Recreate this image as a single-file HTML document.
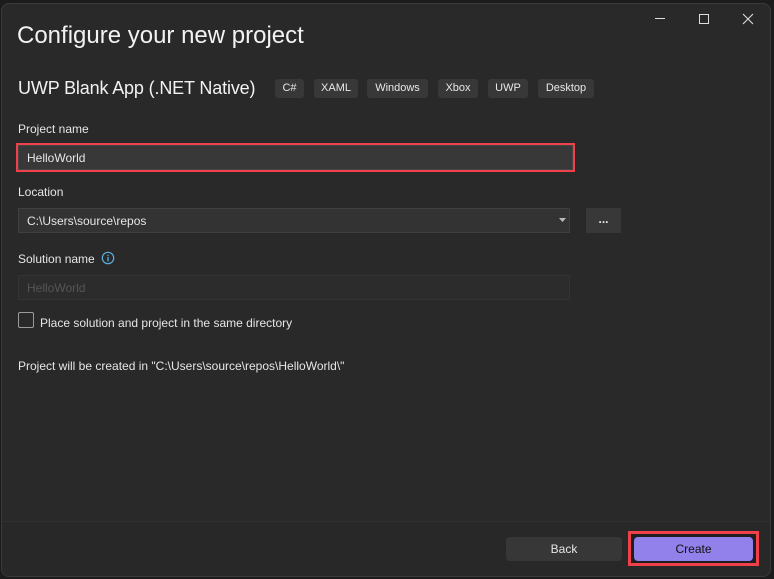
<!DOCTYPE html>
<html><head><meta charset="utf-8"><style>
*{margin:0;padding:0;box-sizing:border-box}
body{width:774px;height:579px;background:#1c1c1c;position:relative;overflow:hidden;font-family:"Liberation Sans",sans-serif;color:#e6e6e6}
.win{position:absolute;left:1px;top:3px;width:770px;height:574px;background:#292929;border:1px solid #3a3a3a;border-radius:8px;overflow:hidden}
.a{position:absolute}
.t{font-size:12px;white-space:nowrap}
.tag{position:absolute;top:79px;height:19px;background:#383838;border-radius:3px;font-size:11px;line-height:19px;text-align:center;color:#e8e8e8}
.inp{position:absolute;background:#383838;border:1px solid #444;font-size:12px;line-height:22px;padding-left:8px}
</style></head><body>
<div class="win">
<div class="a" style="left:0;top:517px;width:770px;height:60px;background:#282828;border-top:1px solid #2f2f2f"></div>
</div>
<div class="a" style="left:17px;top:22px;font-size:24px;color:#f2f2f2;white-space:nowrap">Configure your new project</div>
<div class="a" style="left:18px;top:78px;font-size:18px;letter-spacing:-0.15px;color:#f2f2f2;white-space:nowrap">UWP Blank App (.NET Native)</div>
<div class="tag" style="left:275px;width:29px">C#</div>
<div class="tag" style="left:314px;width:44px">XAML</div>
<div class="tag" style="left:367px;width:61px">Windows</div>
<div class="tag" style="left:438px;width:40px">Xbox</div>
<div class="tag" style="left:488px;width:40px">UWP</div>
<div class="tag" style="left:538px;width:56px">Desktop</div>
<div class="a" style="left:655px;top:18px;width:10px;height:1px;background:#ddd"></div>
<div class="a" style="left:699px;top:14px;width:10px;height:10px;border:1px solid #ddd"></div>
<svg class="a" style="left:742px;top:13px" width="12" height="12"><path d="M1 1L11 11M11 1L1 11" stroke="#ddd" stroke-width="1.1"/></svg>
<div class="a t" style="left:18px;top:122px">Project name</div>
<div class="a" style="left:16px;top:143px;width:559px;height:29px;border:2px solid #f0404a"></div>
<div class="inp" style="left:18px;top:145px;width:555px;height:25px;border-color:#454545;line-height:24px">HelloWorld</div>
<div class="a t" style="left:18px;top:185px">Location</div>
<div class="inp" style="left:18px;top:208px;width:552px;height:25px;background:#333;border-color:#3f3f3f;line-height:24px">C:\Users\source\repos</div>
<svg class="a" style="left:559px;top:218px" width="7" height="4"><path d="M0 0H7L3.5 4Z" fill="#bbb"/></svg>
<div class="a" style="left:586px;top:208px;width:35px;height:25px;background:#383838;font-size:12px;font-weight:bold;text-align:center;line-height:22px">...</div>
<div class="a t" style="left:18px;top:252px">Solution name</div>
<svg class="a" style="left:101px;top:251px" width="14" height="14"><circle cx="7" cy="7" r="5.7" fill="none" stroke="#5ab0e0" stroke-width="1.2"/><rect x="6.4" y="6" width="1.3" height="4.3" fill="#5ab0e0"/><rect x="6.4" y="3.8" width="1.3" height="1.3" fill="#5ab0e0"/></svg>
<div class="inp" style="left:18px;top:275px;width:552px;height:25px;background:#2c2c2c;border-color:#333;color:#555;line-height:24px">HelloWorld</div>
<div class="a" style="left:18px;top:312px;width:16px;height:16px;border:1px solid #9a9a9a;border-radius:2px"></div>
<div class="a t" style="left:40px;top:316px">Place solution and project in the same directory</div>
<div class="a t" style="left:18px;top:359px">Project will be created in "C:\Users\source\repos\HelloWorld\"</div>
<div class="a" style="left:506px;top:537px;width:116px;height:24px;background:#373737;border-radius:4px;font-size:12px;text-align:center;line-height:24px">Back</div>
<div class="a" style="left:628px;top:531px;width:131px;height:35px;border:3px solid #f0404a;background:#1f1f1f"></div>
<div class="a" style="left:634px;top:537px;width:119px;height:24px;background:#9281ea;border-radius:4px;font-size:12px;text-align:center;line-height:24px;color:#111">Create</div>
</body></html>
